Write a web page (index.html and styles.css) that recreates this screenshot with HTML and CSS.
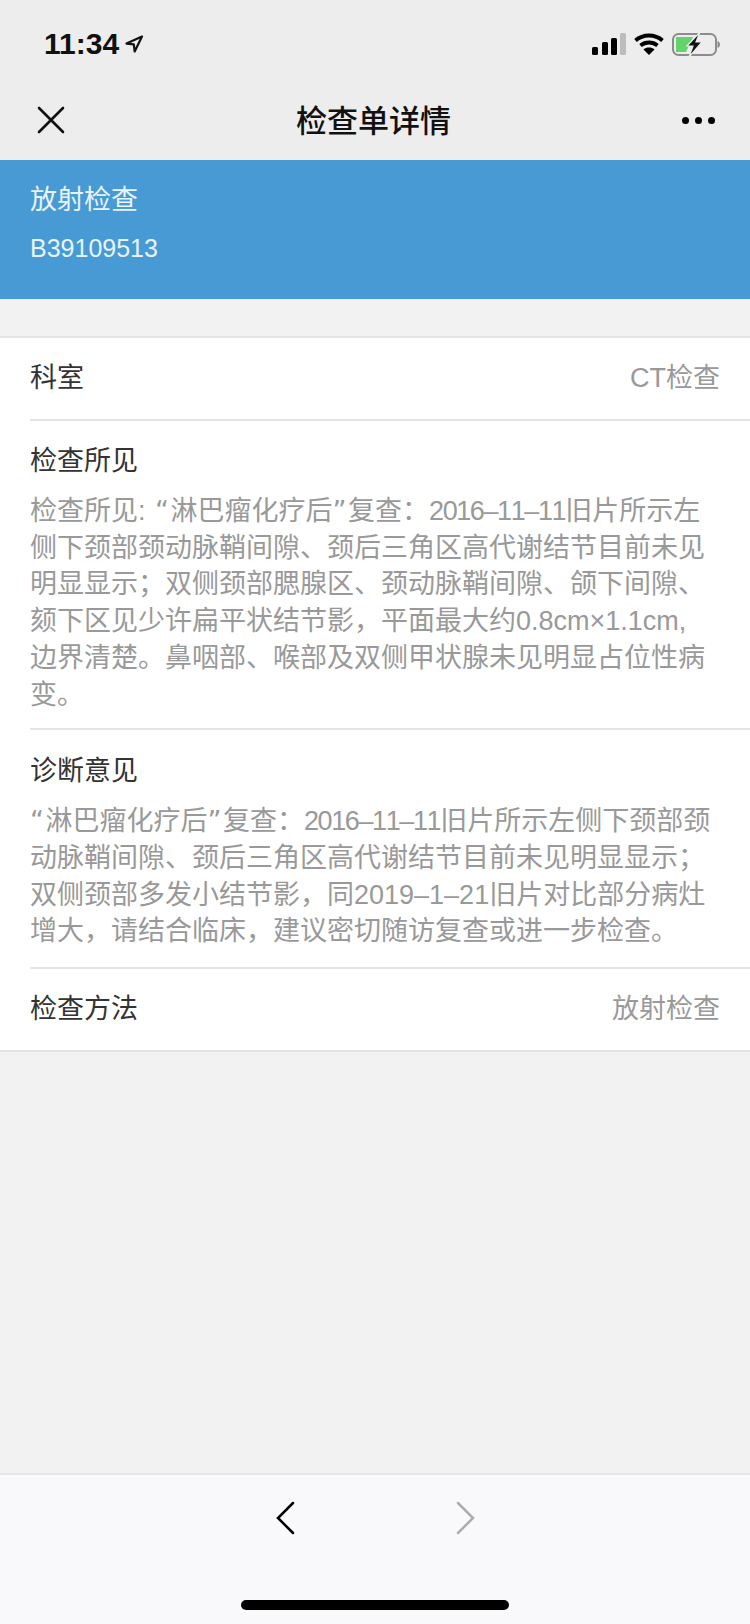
FILE: index.html
```html
<!DOCTYPE html>
<html lang="zh-CN">
<head>
  <meta charset="UTF-8" />
  <meta name="viewport" content="width=device-width, initial-scale=1.0" />
  <title>检查单详情</title>
  <link rel="stylesheet" href="styles.css">
</head>
<body>
  <div class="page">
    <!-- 状态栏 -->
    <div class="status-bar">
      <div class="status-time">
        <span>11:34</span>
        <svg width="20" height="20" viewBox="0 0 20 20"><path d="M18 2.500 2.500 9.600l7.300.7.9 7.200z" fill="none" stroke="#111" stroke-width="2.200" stroke-linejoin="round"/></svg>
      </div>
      <div class="status-icons">
        <svg width="34" height="22" viewBox="0 0 34 22">
          <rect x="0" y="14" width="6" height="8" rx="1.500" fill="#000"/>
          <rect x="10" y="9" width="6" height="13" rx="1.500" fill="#000"/>
          <rect x="19" y="5" width="6" height="17" rx="1.500" fill="#000"/>
          <rect x="28" y="0" width="6" height="22" rx="1.500" fill="#bdbdbd"/>
        </svg>
        <svg width="30" height="22" viewBox="0 0 30 22">
          <path d="M1.500 7.500C9 .8 21 .8 28.500 7.500" fill="none" stroke="#000" stroke-width="3.800"/>
          <path d="M6.500 12.500c4.800-4 12.200-4 17 0" fill="none" stroke="#000" stroke-width="3.800"/>
          <path d="M15 22l-5.500-5.600c3-2.500 8-2.500 11 0z" fill="#000"/>
        </svg>
        <svg width="48" height="24" viewBox="0 0 48 24">
          <rect x="1" y="2" width="43" height="21" rx="5.500" fill="none" stroke="#8c8c8c" stroke-width="2"/>
          <path d="M4 5h17l-7 15H4z" fill="#62d46a"/>
          <path d="M45.500 9c1.500.5 2.500 1.500 2.500 3.500s-1 3-2.500 3.500z" fill="#8c8c8c"/>
          <path d="M28 0 15 14h6l-4 11 13-15h-6z" fill="#111" stroke="#ededed" stroke-width="1.200"/>
        </svg>
      </div>
    </div>

    <!-- 导航栏 -->
    <div class="nav-bar">
      <svg class="nav-close" width="30" height="30" viewBox="0 0 30 30"><path d="M3 3 27 27M27 3 3 27" stroke="#111" stroke-width="2.600" stroke-linecap="round"/></svg>
      <div class="nav-title">检查单详情</div>
      <div class="nav-more"><i></i><i></i><i></i></div>
    </div>

    <!-- 蓝色头部 -->
    <div class="banner">
      <div class="banner-title">放射检查</div>
      <div class="banner-code">B39109513</div>
    </div>

    <div class="list">
      <div class="row">
        <span class="row-label">科室</span>
        <span class="row-value">CT检查</span>
      </div>
      <div class="block">
        <div class="block-title">检查所见</div>
        <div class="block-text">检查所见: <span class="quote">“</span>淋巴瘤化疗后<span class="quote">”</span>复查：<span class="date">2016–11–11</span>旧片所示左<br>侧下颈部颈动脉鞘间隙、颈后三角区高代谢结节目前未见<br>明显显示；双侧颈部腮腺区、颈动脉鞘间隙、颌下间隙、<br>颏下区见少许扁平状结节影，平面最大约0.8cm×1.1cm,<br>边界清楚。鼻咽部、喉部及双侧甲状腺未见明显占位性病<br>变。</div>
      </div>
      <div class="block block-last">
        <div class="block-title">诊断意见</div>
        <div class="block-text"><span class="quote">“</span>淋巴瘤化疗后<span class="quote">”</span>复查：<span class="date">2016–11–11</span>旧片所示左侧下颈部颈<br>动脉鞘间隙、颈后三角区高代谢结节目前未见明显显示；<br>双侧颈部多发小结节影，同<span class="date date-short">2019–1–21</span>旧片对比部分病灶<br>增大，请结合临床，建议密切随访复查或进一步检查。</div>
      </div>
      <div class="row">
        <span class="row-label">检查方法</span>
        <span class="row-value">放射检查</span>
      </div>
    </div>

    <div class="spacer"></div>

    <!-- 底部工具栏 -->
    <div class="toolbar">
      <div class="toolbar-btns">
        <svg width="22" height="34" viewBox="0 0 22 34"><path d="M18 2 3 17l15 15" fill="none" stroke="#000" stroke-width="2.500" stroke-linecap="round"/></svg>
        <svg width="22" height="34" viewBox="0 0 22 34"><path d="M4 2l15 15L4 32" fill="none" stroke="#adadad" stroke-width="2.500" stroke-linecap="round"/></svg>
      </div>
      <div class="home-bar"></div>
    </div>
  </div>
</body>
</html>
```

FILE: styles.css
```css
body {
  margin: 0;
  padding: 0;
  font-family: "Liberation Sans", "Noto Sans CJK SC", sans-serif;
  background: #f2f2f3;
}
.page {
  width: 750px;
  height: 1624px;
  display: flex;
  flex-direction: column;
  overflow: hidden;
}
.status-bar {
  height: 88px;
  padding: 0 30px 0 44px;
  background: #ededed;
  display: flex;
  justify-content: space-between;
  align-items: center;
  box-sizing: border-box;
}
.status-time {
  display: flex;
  align-items: center;
  gap: 5px;
  font-size: 30px;
  font-weight: bold;
  color: #111;
}
.status-icons {
  display: flex;
  align-items: center;
  gap: 8px;
}
.nav-bar {
  height: 72px;
  padding: 0 35px 8px 32px;
  background: #ededed;
  display: grid;
  grid-template-columns: 1fr auto 1fr;
  align-items: center;
  box-sizing: border-box;
}
.nav-close {
  margin-left: 4px;
}
.nav-title {
  margin-bottom: 4px;
  font-size: 31px;
  font-weight: 500;
  color: #111;
}
.nav-more {
  display: flex;
  gap: 6px;
  justify-self: end;
}
.nav-more i {
  width: 7px;
  height: 7px;
  border-radius: 50%;
  background: #000;
  flex: none;
}
.banner {
  height: 139px;
  padding: 20px 30px 0;
  background: #479ad4;
  color: #e8f4fb;
  box-sizing: border-box;
}
.banner-title {
  font-size: 27px;
  line-height: 40px;
}
.banner-code {
  margin-top: 10px;
  font-size: 25px;
  line-height: 36px;
}
.list {
  margin-top: 37px;
  padding-left: 30px;
  background: #fff;
  border-top: 2px solid #e4e4e4;
  border-bottom: 2px solid #e4e4e4;
}
.row {
  height: 74px;
  padding: 0 30px 7px 0;
  display: flex;
  justify-content: space-between;
  align-items: center;
  border-bottom: 2px solid #e4e4e4;
}
.row:last-child {
  border-bottom: none;
}
.row-label,
.block-title {
  font-size: 27px;
  color: #333;
}
.row-value {
  font-size: 27px;
  color: #999;
}
.block {
  padding: 21px 30px 15px 0;
  border-bottom: 2px solid #e4e4e4;
}
.block-last {
  padding-top: 22px;
  padding-bottom: 17px;
}
.block-title {
  line-height: 38px;
}
.block-text {
  margin-top: 13px;
  font-size: 27px;
  line-height: 36.7px;
  color: #999;
  white-space: nowrap;
  word-spacing: 2px;
}
.quote {
  font-family: "DejaVu Sans", sans-serif;
  letter-spacing: 1.5px;
}
.date {
  font-kerning: none;
  letter-spacing: -1.4px;
}
.date-short {
  letter-spacing: 0;
}
.spacer {
  flex: 1;
}
.toolbar {
  height: 151px;
  background: #f9f9fb;
  border-top: 2px solid #e6e6e6;
  box-sizing: border-box;
  display: flex;
  flex-direction: column;
  align-items: center;
}
.toolbar-btns {
  margin-top: 26px;
  display: flex;
  gap: 157px;
}
.home-bar {
  margin-top: 65px;
  width: 268px;
  height: 10px;
  border-radius: 5px;
  background: #000;
}
```
